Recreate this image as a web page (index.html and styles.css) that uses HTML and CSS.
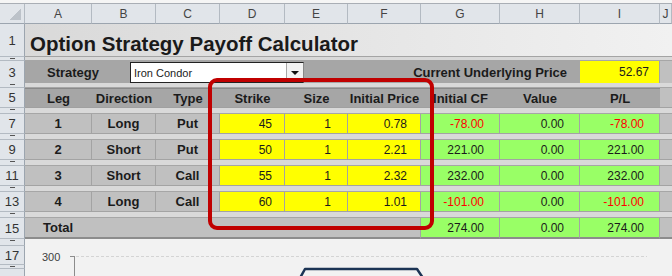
FILE: index.html
```html
<!DOCTYPE html>
<html lang="en">
<head>
    <meta charset="UTF-8">
    <title>Option Strategy Payoff Calculator</title>
    <link rel="stylesheet" href="styles.css">
</head>
<body>

<div class="sheet">
    <div class="topbar"></div>

    <div class="row colhead">
        <div class="corner"></div>
        <div>A</div><div>B</div><div>C</div><div>D</div><div>E</div>
        <div>F</div><div>G</div><div>H</div><div>I</div><div>J</div>
    </div>

    <div class="row r-title">
        <div class="rh">1</div>
        <div class="title">Option Strategy Payoff Calculator</div>
    </div>

    <div class="row r-gap g4">
        <div class="rh thin"></div>
        <div class="gapfill"></div>
    </div>

    <div class="row r-band">
        <div class="rh">3</div>
        <div class="band">
            <span class="strat-label">Strategy</span>
            <div class="combo">
                <span class="combo-text">Iron Condor</span>
                <span class="combo-btn"></span>
            </div>
            <span class="price-label">Current Underlying Price</span>
        </div>
        <div class="cell yellow num spot">52.67</div>
        <div class="cell side"></div>
    </div>

    <div class="row r-gap g5">
        <div class="rh thin"></div>
        <div class="gapfill"></div>
    </div>

    <div class="row r-head">
        <div class="rh">5</div>
        <div class="hd">Leg</div>
        <div class="hd">Direction</div>
        <div class="hd">Type</div>
        <div class="hd">Strike</div>
        <div class="hd">Size</div>
        <div class="hd">Initial Price</div>
        <div class="hd">Initial CF</div>
        <div class="hd">Value</div>
        <div class="hd">P/L</div>
        <div class="cell side"></div>
    </div>

    <div class="row r-gap g6">
        <div class="rh thin"></div>
        <div class="gapfill"></div>
    </div>

    <div class="row r-data">
        <div class="rh">7</div>
        <div class="cell lab">1</div>
        <div class="cell lab">Long</div>
        <div class="cell lab">Put</div>
        <div class="cell yellow num">45</div>
        <div class="cell yellow num">1</div>
        <div class="cell yellow num">0.78</div>
        <div class="cell green num neg">-78.00</div>
        <div class="cell green num">0.00</div>
        <div class="cell green num neg">-78.00</div>
        <div class="cell side"></div>
    </div>

    <div class="row r-gap g6">
        <div class="rh thin"></div>
        <div class="gapfill"></div>
    </div>

    <div class="row r-data">
        <div class="rh">9</div>
        <div class="cell lab">2</div>
        <div class="cell lab">Short</div>
        <div class="cell lab">Put</div>
        <div class="cell yellow num">50</div>
        <div class="cell yellow num">1</div>
        <div class="cell yellow num">2.21</div>
        <div class="cell green num">221.00</div>
        <div class="cell green num">0.00</div>
        <div class="cell green num">221.00</div>
        <div class="cell side"></div>
    </div>

    <div class="row r-gap g6">
        <div class="rh thin"></div>
        <div class="gapfill"></div>
    </div>

    <div class="row r-data">
        <div class="rh">11</div>
        <div class="cell lab">3</div>
        <div class="cell lab">Short</div>
        <div class="cell lab">Call</div>
        <div class="cell yellow num">55</div>
        <div class="cell yellow num">1</div>
        <div class="cell yellow num">2.32</div>
        <div class="cell green num">232.00</div>
        <div class="cell green num">0.00</div>
        <div class="cell green num">232.00</div>
        <div class="cell side"></div>
    </div>

    <div class="row r-gap g6">
        <div class="rh thin"></div>
        <div class="gapfill"></div>
    </div>

    <div class="row r-data">
        <div class="rh">13</div>
        <div class="cell lab">4</div>
        <div class="cell lab">Long</div>
        <div class="cell lab">Call</div>
        <div class="cell yellow num">60</div>
        <div class="cell yellow num">1</div>
        <div class="cell yellow num">1.01</div>
        <div class="cell green num neg">-101.00</div>
        <div class="cell green num">0.00</div>
        <div class="cell green num neg">-101.00</div>
        <div class="cell side"></div>
    </div>

    <div class="row r-gap g6">
        <div class="rh thin"></div>
        <div class="gapfill"></div>
    </div>

    <div class="row r-total">
        <div class="rh">15</div>
        <div class="cell total-lab">Total</div>
        <div class="cell green num">274.00</div>
        <div class="cell green num">0.00</div>
        <div class="cell green num">274.00</div>
        <div class="cell side"></div>
    </div>

    <div class="row r-chart">
        <div class="rh-stack">
            <div class="rh thin h6"></div>
            <div class="rh h18">17</div>
            <div class="rh thin h3"></div>
            <div class="rh fill"></div>
        </div>
        <svg class="chart" width="647" height="37" viewBox="0 0 647 37">
            <text x="17" y="22" class="axis-label">300</text>
            <line x1="45" y1="17.5" x2="50" y2="17.5" stroke="#8c8c8c" stroke-width="1"/>
            <line x1="49.5" y1="17" x2="49.5" y2="37" stroke="#8c8c8c" stroke-width="1"/>
            <line x1="51" y1="17.5" x2="622" y2="17.5" stroke="#d4d4d4" stroke-width="1" stroke-dasharray="3,2"/>
            <polyline points="275,39 280,30 392,30 398,39" fill="none" stroke="#1c3455" stroke-width="2.5" stroke-linejoin="round"/>
        </svg>
    </div>

    <!-- highlight drawn over the input columns -->
    <div class="highlight"></div>
</div>

</body>
</html>
```

FILE: styles.css
```css
body {
    margin: 0;
    font-family: "Liberation Sans", Arial, sans-serif;
    color: #1b1b1b;
    background: #ffffff;
}
.sheet {
    position: relative;
    width: 672px;
    height: 276px;
    overflow: hidden;
    background: #f2f2f2;
}
.topbar {
    height: 3px;
    background: #f5f5f5;
    border-bottom: 1px solid #a9aeb5;
}
.row {
    display: grid;
    grid-template-columns: 25px 67px 64px 64px 65px 63px 73px 79px 80px 80px 12px;
}
.row > div {
    box-sizing: border-box;
}

/* column and row headers */
.colhead {
    height: 20px;
}
.colhead div {
    background: #e1e5ea;
    border-right: 1px solid #b3bac2;
    border-bottom: 1px solid #9ca5af;
    font-size: 12px;
    color: #444;
    display: flex;
    align-items: center;
    justify-content: center;
}
.colhead .corner {
    position: relative;
}
.corner::after {
    content: "";
    position: absolute;
    right: 3px;
    bottom: 3px;
    width: 11px;
    height: 11px;
    background: linear-gradient(135deg, transparent 50%, #bcc2c9 50%);
}
.rh {
    background: #e1e5ea;
    border-right: 1px solid #9ca5af;
    border-bottom: 1px solid #b3bac2;
    font-size: 13px;
    color: #333;
    display: flex;
    align-items: center;
    justify-content: center;
}
.rh.thin {
    position: relative;
}
.rh.thin::after {
    content: "";
    position: absolute;
    left: 10px;
    top: 1px;
    width: 5px;
    height: 1px;
    background: #555;
}

/* title row */
.r-title {
    height: 33px;
}
.title {
    grid-column: 2 / -1;
    background: linear-gradient(90deg, #d9d9d9, #f1f1f1);
    border-bottom: 1px solid #a4a4a4;
    font-weight: bold;
    font-size: 20.5px;
    padding: 8px 0 0 5px;
    color: #1a1a1a;
}

/* thin spacer rows */
.g4 { height: 4px; }
.g5 { height: 5px; }
.g6 { height: 6px; }
.gapfill {
    grid-column: 2 / -1;
    background: #d9d9d9;
    border-bottom: 1px solid #a6a6a6;
}

/* strategy row */
.r-band {
    height: 22px;
}
.band {
    grid-column: 2 / 10;
    background: #a6a6a6;
    border-bottom: 1px solid #a0a0a0;
    display: flex;
    align-items: center;
    font-weight: bold;
    font-size: 13px;
}
.strat-label {
    width: 105px;
    box-sizing: border-box;
    padding-left: 22px;
}
.combo {
    width: 174px;
    height: 21px;
    box-sizing: border-box;
    background: #fff;
    border: 1px solid #222;
    border-right-color: #888;
    display: flex;
    align-items: center;
    margin-top: 1px;
}
.combo-text {
    flex: 1;
    font-weight: normal;
    font-size: 11px;
    padding-left: 3px;
}
.combo-btn {
    width: 17px;
    height: 19px;
    box-sizing: border-box;
    background: #f3f3f3;
    border-left: 1px solid #a8a8a8;
    position: relative;
}
.combo-btn::after {
    content: "";
    position: absolute;
    left: 4px;
    top: 8px;
    border-left: 4px solid transparent;
    border-right: 4px solid transparent;
    border-top: 4px solid #111;
}
.price-label {
    margin-left: auto;
    padding-right: 13px;
}
.spot {
    padding-right: 10px !important;
}

/* table header row */
.r-head {
    height: 20px;
}
.hd {
    background: #a6a6a6;
    border-top: 1px solid #8a8a8a;
    border-bottom: 1px solid #a0a0a0;
    font-weight: bold;
    font-size: 13px;
    display: flex;
    align-items: center;
    justify-content: center;
}

/* data rows */
.r-data, .r-total {
    height: 20px;
}
.cell {
    border-right: 1px solid #a3a3a3;
    border-bottom: 1px solid #a3a3a3;
    display: flex;
    align-items: center;
    font-size: 12px;
}
.lab {
    background: #c0c0c0;
    justify-content: center;
    font-weight: bold;
    font-size: 13px;
}
.yellow {
    background: #ffff00;
}
.green {
    background: #99ff66;
}
.num {
    justify-content: flex-end;
    padding-right: 15px;
}
.r-data .cell:nth-child(5) { padding-right: 12px; }
.r-data .cell:nth-child(6) { padding-right: 16px; }
.r-data .cell:nth-child(7) { padding-right: 13px; }
.neg {
    color: #ff0000;
}
.side {
    background: #c0c0c0;
    border-right: none;
}
.r-total {
    height: 21px;
}
.r-total .cell {
    border-bottom: 2px solid #8c8c8c;
}
.total-lab {
    grid-column: 2 / 8;
    background: #c0c0c0;
    font-weight: bold;
    font-size: 13px;
    padding-left: 18px;
}

/* chart strip */
.r-chart {
    height: 37px;
}
.rh-stack {
    display: flex;
    flex-direction: column;
}
.h6 { height: 6px; }
.h18 { height: 18px; }
.h3 { height: 3px; }
.rh.fill {
    flex: 1;
    border-bottom: none;
}
.chart {
    grid-column: 2 / -1;
    display: block;
}
.axis-label {
    font-family: "Liberation Sans", Arial, sans-serif;
    font-size: 11px;
    fill: #404040;
}

.highlight {
    position: absolute;
    left: 208px;
    top: 78px;
    width: 226px;
    height: 152px;
    box-sizing: border-box;
    border: 4px solid #c00000;
    border-radius: 9px;
}
```
